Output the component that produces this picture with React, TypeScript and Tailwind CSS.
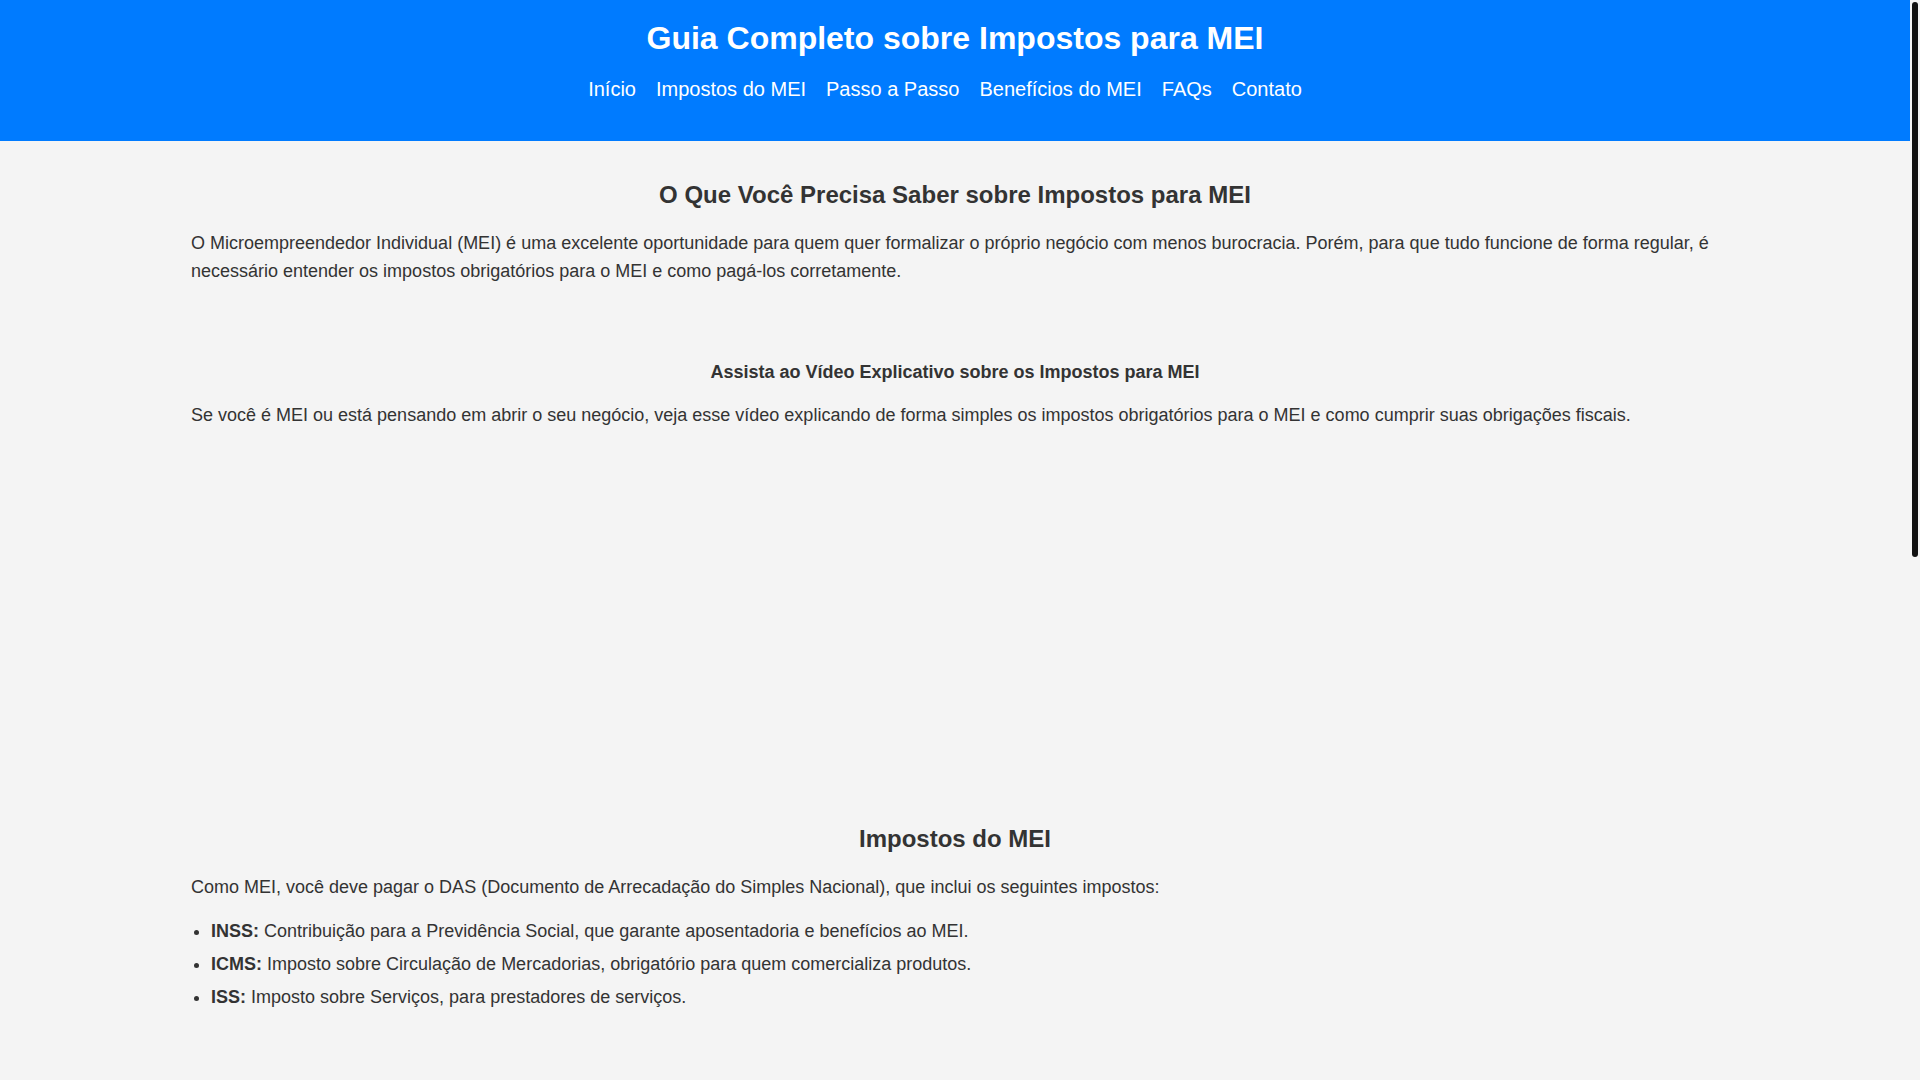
import React from "react";

const navItems = ["Início", "Impostos do MEI", "Passo a Passo", "Benefícios do MEI", "FAQs", "Contato"];

function H2({ children }: { children: React.ReactNode }) {
  return (
    <h2 className="text-center text-[24px] font-bold leading-[32px] mt-[18px] mb-[17.5px]">{children}</h2>
  );
}

function H3({ children, center }: { children: React.ReactNode; center?: boolean }) {
  return (
    <h3
      className={
        center
          ? "text-center text-[18px] font-bold leading-[28px] mt-[17px] mb-[15.5px]"
          : "text-[18px] font-bold leading-[28px] mt-[17px] mb-[15.5px]"
      }
    >
      {children}
    </h3>
  );
}

function P({ children }: { children: React.ReactNode }) {
  return <p className="text-[18px] leading-[28px] mb-[16px]">{children}</p>;
}

function Li({ label, children }: { label?: string; children: React.ReactNode }) {
  return (
    <li className="text-[18px] leading-[28px] mb-[5px]">
      {label && <strong className="font-bold">{label}</strong>} {children}
    </li>
  );
}

export default function App() {
  return (
    <div className="flex items-start bg-[#f4f4f4] text-[#333333] font-['Liberation_Sans',Arial,sans-serif]">
      <div className="flex-1 min-w-0">
        <header className="bg-[#007bff] text-white text-center pt-[19px] pb-[38px]">
          <h1 className="text-[32px] font-bold leading-[38px]">Guia Completo sobre Impostos para MEI</h1>
          <nav className="mt-[18px]">
            <ul className="flex justify-center text-[20px] leading-[28px]">
              {navItems.map((item) => (
                <li key={item} className="mr-5">
                  <a href="#" className="text-white no-underline">
                    {item}
                  </a>
                </li>
              ))}
            </ul>
          </nav>
        </header>

        <main className="w-[80%] mx-auto">
          <section className="py-5">
            <H2>O Que Você Precisa Saber sobre Impostos para MEI</H2>
            <P>
              O Microempreendedor Individual (MEI) é uma excelente oportunidade para quem quer formalizar o próprio
              negócio com menos burocracia. Porém, para que tudo funcione de forma regular, é necessário entender os
              impostos obrigatórios para o MEI e como pagá-los corretamente.
            </P>
          </section>

          <section className="py-5">
            <H3 center>Assista ao Vídeo Explicativo sobre os Impostos para MEI</H3>
            <P>
              Se você é MEI ou está pensando em abrir o seu negócio, veja esse vídeo explicando de forma simples os
              impostos obrigatórios para o MEI e como cumprir suas obrigações fiscais.
            </P>
            <div className="h-[320px]" aria-label="Vídeo explicativo"></div>
          </section>

          <section className="py-5">
            <H2>Impostos do MEI</H2>
            <P>
              Como MEI, você deve pagar o DAS (Documento de Arrecadação do Simples Nacional), que inclui os seguintes
              impostos:
            </P>
            <ul className="list-disc pl-5 mt-[3px] mb-[16px]">
              <Li label="INSS:">Contribuição para a Previdência Social, que garante aposentadoria e benefícios ao MEI.</Li>
              <Li label="ICMS:">Imposto sobre Circulação de Mercadorias, obrigatório para quem comercializa produtos.</Li>
              <Li label="ISS:">Imposto sobre Serviços, para prestadores de serviços.</Li>
            </ul>
          </section>

          <section className="py-5">
            <H2>Passo a Passo para Pagar os Impostos do MEI</H2>
            <P>Pagar o DAS é simples e pode ser feito todos os meses pela internet. Siga os passos abaixo:</P>
            <ol className="list-decimal pl-5 mt-[3px] mb-[16px]">
              <Li>Acesse o Portal do Empreendedor ou o aplicativo MEI.</Li>
              <Li>Informe o seu CNPJ e selecione a opção de emissão do DAS.</Li>
              <Li>Escolha o mês de referência e gere a guia de pagamento.</Li>
              <Li>Pague a guia até o dia 20 de cada mês em bancos, lotéricas ou via Pix.</Li>
            </ol>
          </section>

          <section className="py-5">
            <H2>Benefícios do MEI</H2>
            <P>Ao manter os impostos em dia, o MEI tem acesso a diversos benefícios:</P>
            <ul className="list-disc pl-5 mt-[3px] mb-[16px]">
              <Li label="Aposentadoria:">Direito à aposentadoria por idade ou invalidez.</Li>
              <Li label="Auxílio-doença:">Proteção em caso de afastamento por problemas de saúde.</Li>
              <Li label="Salário-maternidade:">Benefício garantido para as empreendedoras.</Li>
              <Li label="CNPJ:">Emissão de notas fiscais e acesso a crédito com condições especiais.</Li>
            </ul>
          </section>

          <section className="py-5">
            <H2>Perguntas Frequentes (FAQs)</H2>
            <H3>Qual é o valor do DAS para o MEI?</H3>
            <P>O valor varia de acordo com a atividade exercida e é reajustado anualmente com base no salário mínimo.</P>
            <H3>O que acontece se eu atrasar o pagamento?</H3>
            <P>O pagamento em atraso gera multa e juros, além de poder suspender o acesso aos benefícios previdenciários.</P>
            <H3>Preciso entregar alguma declaração anual?</H3>
            <P>Sim, todo MEI deve entregar a Declaração Anual do Simples Nacional (DASN-SIMEI) até 31 de maio.</P>
          </section>

          <section className="py-5">
            <H2>Contato</H2>
            <P>Tem dúvidas sobre os impostos do MEI? Entre em contato conosco pelo e-mail contato@guiamei.com.br.</P>
          </section>
        </main>

        <footer className="bg-[#007bff] text-white text-center py-5 text-[16px] leading-[24px]">
          © 2024 Guia Completo sobre Impostos para MEI. Todos os direitos reservados.
        </footer>
      </div>

      <div className="sticky top-0 h-screen w-[10px] shrink-0 bg-[#f4f4f4] pt-[2px]" aria-hidden="true">
        <div className="mx-auto h-[555px] w-[6px] rounded-full bg-[#111111]"></div>
      </div>
    </div>
  );
}
